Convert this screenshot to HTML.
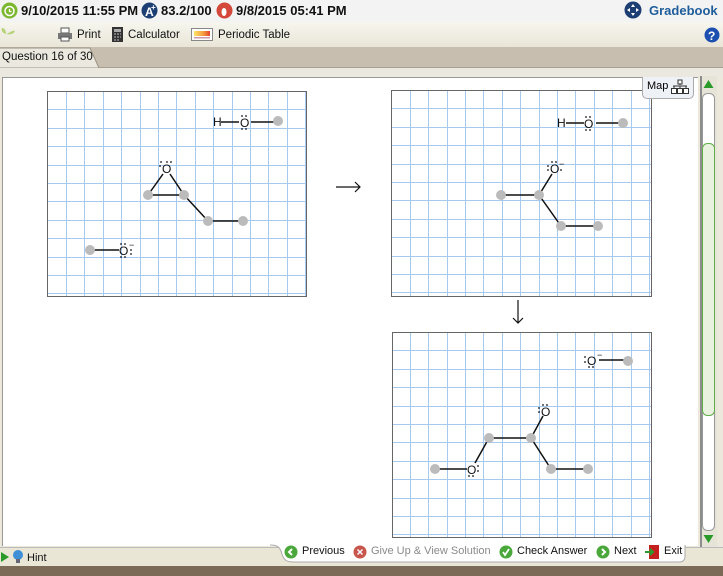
<!DOCTYPE html>
<html><head><style>
*{margin:0;padding:0;box-sizing:border-box}
body{width:723px;height:576px;overflow:hidden;background:#ece9dc;font-family:"Liberation Sans",sans-serif;position:relative}
.abs{position:absolute}
.top{left:0;top:0;width:723px;height:22px;background:#f3f3f3;font-weight:bold;font-size:13px;color:#111}
.tb{left:0;top:22px;width:723px;height:25px;background:linear-gradient(#f7f6ee,#e9e6d8);font-size:11.5px;color:#111}
.tabbar{left:0;top:47px;width:723px;height:21px;background:#c7beb0;border-bottom:1px solid #a89f90}
.strip{left:0;top:68px;width:723px;height:10px;background:#ebe9df}
.content{left:2px;top:77px;width:696px;height:469px;background:#fff;border-left:1px solid #999;border-top:1px solid #999}
.sb{left:700px;top:76px;width:17px;height:471px;background:#e6e4d6;border-left:2px solid #8d8d8d}
.bottom{left:0;top:547px;width:723px;height:19px;background:#e9e6d6;border-top:1px solid #bbb}
.brown{left:0;top:566px;width:723px;height:10px;background:#7b6a55}
</style></head><body>
<div class="abs top">
 <svg class="abs" style="left:1px;top:2px" width="17" height="17"><circle cx="8.5" cy="8.5" r="8" fill="#7cb82f"/><circle cx="8.5" cy="9" r="4.5" fill="none" stroke="#fff" stroke-width="1.5"/><path d="M8.5 7v2.5h2" stroke="#fff" stroke-width="1.3" fill="none"/></svg>
 <span class="abs" style="left:21px;top:3px">9/10/2015 11:55 PM</span>
 <svg class="abs" style="left:141px;top:2px" width="17" height="17"><circle cx="8.5" cy="8.5" r="8" fill="#1c3e73"/><text x="4" y="14" font-size="12" font-weight="bold" fill="#fff" font-family="Liberation Sans">A</text><text x="10" y="8" font-size="8" fill="#fff" font-family="Liberation Sans">+</text></svg>
 <span class="abs" style="left:161px;top:3px">83.2/100</span>
 <svg class="abs" style="left:216px;top:2px" width="17" height="17"><circle cx="8.5" cy="8.5" r="8" fill="#d4473b"/><ellipse cx="8" cy="10" rx="2.5" ry="4" fill="#fff"/></svg>
 <span class="abs" style="left:236px;top:3px">9/8/2015 05:41 PM</span>
 <svg class="abs" style="left:624px;top:1px" width="18" height="18"><circle cx="9" cy="9" r="8.5" fill="#1c3e73"/><path d="M9 3l2 3h-4zM9 15l2-3h-4zM3 9l3 2v-4zM15 9l-3 2v-4z" fill="#fff"/></svg>
 <span class="abs" style="left:649px;top:3px;color:#1f5d9a">Gradebook</span>
</div>
<div class="abs tb">
 <svg class="abs" style="left:0;top:3px" width="18" height="18"><path d="M6 17V8M6 9C2 8 1 5 2 3c3 0 4 3 4 6M6 9c4-1 6-4 9-3-1 3-5 4-9 3" fill="#b6d37a"/></svg>
 <svg class="abs" style="left:57px;top:5px" width="16" height="15"><rect x="4" y="1" width="8" height="5" fill="#fff" stroke="#555"/><rect x="1" y="6" width="14" height="6" fill="#777"/><rect x="4" y="10" width="8" height="4" fill="#fff" stroke="#555"/></svg>
 <span class="abs" style="left:77px;top:7px">Print</span>
 <svg class="abs" style="left:112px;top:5px" width="11" height="15"><rect width="11" height="15" fill="#333"/><rect x="2" y="2" width="7" height="3" fill="#aaa"/><path d="M2 7h2M5 7h2M8 7h1M2 10h2M5 10h2M8 10h1M2 13h2M5 13h2" stroke="#bbb"/></svg>
 <span class="abs" style="left:128px;top:7px">Calculator</span>
 <svg class="abs" style="left:191px;top:6px" width="22" height="13"><rect x=".5" y=".5" width="21" height="12" fill="#fff" stroke="#888"/><rect x="3" y="3" width="16" height="5" fill="url(#g)"/><defs><linearGradient id="g"><stop offset="0" stop-color="#ffe36b"/><stop offset=".6" stop-color="#f59a3b"/><stop offset="1" stop-color="#e2432f"/></linearGradient></defs><rect x="3" y="9" width="16" height="1.5" fill="#c9a"/></svg>
 <span class="abs" style="left:218px;top:7px">Periodic Table</span>
 <svg class="abs" style="left:704px;top:5px" width="16" height="16"><circle cx="8" cy="8" r="7.5" fill="#1d4fb0"/><text x="4" y="13" font-size="12" font-weight="bold" fill="#fff" font-family="Liberation Sans">?</text></svg>
</div>
<div class="abs tabbar"></div>
<svg class="abs" style="left:0;top:47px" width="104" height="22"><path d="M0 1H90L99 21H0" fill="#ebe9df" stroke="#9a9384"/></svg>
<span class="abs" style="left:2px;top:51px;font-size:11.5px;color:#111">Question 16 of 30</span>
<div class="abs strip"></div>
<div class="abs content"></div>
<div class="abs sb"></div>
<svg class="abs" style="left:700px;top:76px" width="17" height="471">
 <path d="M8.5 4l5 8h-10z" fill="#2a9a2a"/>
 <rect x="2.5" y="17.5" width="12" height="437" rx="5" fill="#fff" stroke="#999"/>
 <rect x="2.5" y="67.5" width="12" height="272" rx="5" fill="#e8f2de" stroke="#5fae4a"/>
 <path d="M3.5 459h10l-5 8z" fill="#2a9a2a"/>
</svg>
<svg class="abs" style="left:0;top:0" width="723" height="576">
 <rect x="47.5" y="91.5" width="259" height="205" fill="#fff" stroke="none"/>
 <g stroke="#a8c9ef" stroke-width="1" shape-rendering="crispEdges">
  <path d="M66.5 92V296M84.5 92V296M103.5 92V296M121.5 92V296M140.5 92V296M158.5 92V296M176.5 92V296M195.5 92V296M213.5 92V296M232.5 92V296M250.5 92V296M268.5 92V296M287.5 92V296M305.5 92V296
  M48 109.5H306M48 128.5H306M48 146.5H306M48 165.5H306M48 183.5H306M48 201.5H306M48 220.5H306M48 238.5H306M48 257.5H306M48 275.5H306M48 293.5H306"/>
  <path d="M410.5 91V296M428.5 91V296M447.5 91V296M465.5 91V296M483.5 91V296M502.5 91V296M520.5 91V296M539.5 91V296M557.5 91V296M575.5 91V296M594.5 91V296M612.5 91V296M631.5 91V296M649.5 91V296
  M392 108.5H651M392 127.5H651M392 145.5H651M392 164.5H651M392 182.5H651M392 200.5H651M392 219.5H651M392 237.5H651M392 256.5H651M392 274.5H651M392 292.5H651"/>
  <path d="M410.5 333V537M428.5 333V537M447.5 333V537M465.5 333V537M483.5 333V537M502.5 333V537M520.5 333V537M539.5 333V537M557.5 333V537M575.5 333V537M594.5 333V537M612.5 333V537M631.5 333V537M649.5 333V537
  M393 350.5H651M393 369.5H651M393 387.5H651M393 406.5H651M393 424.5H651M393 442.5H651M393 461.5H651M393 479.5H651M393 498.5H651M393 516.5H651M393 534.5H651"/>
 </g>
 <g fill="none" stroke="#666" shape-rendering="crispEdges">
  <rect x="47.5" y="91.5" width="259" height="205"/>
  <rect x="391.5" y="90.5" width="260" height="206"/>
  <rect x="392.5" y="332.5" width="259" height="205"/>
 </g>
 <g stroke="#111" stroke-width="1.5" fill="none">
  <path d="M221 122H239M251 122H278"/>
  <path d="M163 174L148 195H184L170 174M184 195L208 221H243"/>
  <path d="M90 250H119"/>
  <path d="M566 123H584M596 123H623"/>
  <path d="M552 174L539 195H501M539 195L561 226H598"/>
  <path d="M599 360H628"/>
  <path d="M543 416L531 438H489L475 463M467 469H435M531 438L551 469H588"/>
 </g>
 <g fill="#bbb">
  <circle cx="278" cy="121" r="5"/><circle cx="148" cy="195" r="5"/><circle cx="184" cy="195" r="5"/><circle cx="208" cy="221" r="5"/><circle cx="243" cy="221" r="5"/><circle cx="90" cy="250" r="5"/>
  <circle cx="623" cy="123" r="5"/><circle cx="501" cy="195" r="5"/><circle cx="539" cy="195" r="5"/><circle cx="561" cy="226" r="5"/><circle cx="598" cy="226" r="5"/>
  <circle cx="628" cy="361" r="5"/><circle cx="489" cy="438" r="5"/><circle cx="531" cy="438" r="5"/><circle cx="435" cy="469" r="5"/><circle cx="551" cy="469" r="5"/><circle cx="588" cy="469" r="5"/>
 </g>
 <g font-family="Liberation Sans" font-size="12" fill="#111">
  <text x="213" y="126">H</text><text x="240" y="127">O</text>
  <text x="162" y="173">O</text>
  <text x="119" y="255">O</text><text x="129" y="248" font-size="9">−</text>
  <text x="557" y="127">H</text><text x="584" y="128">O</text>
  <text x="550" y="173">O</text><text x="559" y="167" font-size="9">−</text>
  <text x="587" y="365">O</text><text x="597" y="358" font-size="9">−</text>
  <text x="541" y="416">O</text>
  <text x="467" y="474">O</text>
 </g>
 <g fill="#111">
  <circle cx="242" cy="116" r=".9"/><circle cx="246" cy="116" r=".9"/><circle cx="242" cy="129" r=".9"/><circle cx="246" cy="129" r=".9"/>
  <circle cx="161" cy="162" r=".9"/><circle cx="167" cy="162" r=".9"/><circle cx="171" cy="162" r=".9"/><circle cx="160" cy="166" r=".9"/>
  <circle cx="121" cy="244" r=".9"/><circle cx="125" cy="244" r=".9"/><circle cx="121" cy="257" r=".9"/><circle cx="125" cy="257" r=".9"/><circle cx="131" cy="250" r=".9"/><circle cx="131" cy="254" r=".9"/>
  <circle cx="586" cy="117" r=".9"/><circle cx="590" cy="117" r=".9"/><circle cx="586" cy="130" r=".9"/><circle cx="590" cy="130" r=".9"/>
  <circle cx="548" cy="166" r=".9"/><circle cx="548" cy="170" r=".9"/><circle cx="552" cy="162" r=".9"/><circle cx="556" cy="162" r=".9"/><circle cx="561" cy="170" r=".9"/>
  <circle cx="585" cy="357" r=".9"/><circle cx="585" cy="362" r=".9"/><circle cx="589" cy="367" r=".9"/><circle cx="593" cy="367" r=".9"/>
  <circle cx="539" cy="408" r=".9"/><circle cx="539" cy="412" r=".9"/><circle cx="543" cy="405" r=".9"/><circle cx="547" cy="405" r=".9"/>
  <circle cx="469" cy="476" r=".9"/><circle cx="473" cy="476" r=".9"/><circle cx="478" cy="466" r=".9"/><circle cx="478" cy="471" r=".9"/>
 </g>
 <g stroke="#111" stroke-width="1.2" fill="none">
  <path d="M336 187H360M355 182L360 187L355 192"/>
  <path d="M518 300V323M513 318L518 323L523 318"/>
 </g>
</svg>
<div class="abs" style="left:642px;top:77px;width:52px;height:22px;background:#eef1f6;border:1px solid #aaa;border-top:none;border-radius:0 0 5px 5px;font-size:11px;padding:3px 0 0 4px">Map</div>
<svg class="abs" style="left:670px;top:79px" width="20" height="16"><path d="M10 1v5M3 7h14M4 7v3M10 7v3M16 7v3" stroke="#333" fill="none"/><rect x="8" y="1" width="4" height="4" fill="#fff" stroke="#333"/><rect x="1.5" y="9.5" width="5" height="5" fill="#fff" stroke="#333"/><rect x="7.5" y="9.5" width="5" height="5" fill="#fff" stroke="#333"/><rect x="13.5" y="9.5" width="5" height="5" fill="#fff" stroke="#333"/></svg>
<div class="abs bottom"></div>
<div class="abs brown"></div>
<svg class="abs" style="left:0;top:551px" width="10" height="12"><path d="M1 1l8 5-8 5z" fill="#2a9a2a"/></svg>
<svg class="abs" style="left:12px;top:549px" width="12" height="16"><circle cx="6" cy="6" r="5" fill="#3e8fd6"/><rect x="4" y="10" width="4" height="4" fill="#667"/></svg>
<span class="abs" style="left:27px;top:552px;font-size:11px;color:#111">Hint</span>
<svg class="abs" style="left:270px;top:542px" width="420" height="24"><path d="M0 3C8 3 10 5 12 12C14 18 16 20 24 20H409C413 20 415 18 415 14V3" fill="#fff" stroke="#aaa"/></svg>
<div class="abs" style="left:284px;top:545px;font-size:11px;color:#111;white-space:nowrap">
 <svg class="abs" style="left:0;top:0" width="14" height="14"><circle cx="7" cy="7" r="6.5" fill="#4aa83a"/><path d="M8 4L5 7l3 3" stroke="#fff" stroke-width="2" fill="none"/></svg>
 <span class="abs" style="left:18px;top:0">Previous</span>
 <svg class="abs" style="left:69px;top:0" width="14" height="14"><circle cx="7" cy="7" r="6.5" fill="#c9544c"/><path d="M4.5 4.5l5 5M9.5 4.5l-5 5" stroke="#fff" stroke-width="1.5"/></svg>
 <span class="abs" style="left:87px;top:0;color:#8a8a8a">Give Up &amp; View Solution</span>
 <svg class="abs" style="left:215px;top:0" width="14" height="14"><circle cx="7" cy="7" r="6.5" fill="#4aa83a"/><path d="M4 7l2 3 4-6" stroke="#fff" stroke-width="1.8" fill="none"/></svg>
 <span class="abs" style="left:233px;top:0">Check Answer</span>
 <svg class="abs" style="left:312px;top:0" width="14" height="14"><circle cx="7" cy="7" r="6.5" fill="#4aa83a"/><path d="M6 4l3 3-3 3" stroke="#fff" stroke-width="2" fill="none"/></svg>
 <span class="abs" style="left:330px;top:0">Next</span>
 <svg class="abs" style="left:360px;top:-1px" width="16" height="16"><rect x="5" y="1" width="10" height="14" fill="#c42020"/><path d="M1 8h8M6 5l3 3-3 3" stroke="#2a9a2a" stroke-width="2" fill="none"/></svg>
 <span class="abs" style="left:380px;top:0">Exit</span>
</div>
</body></html>
